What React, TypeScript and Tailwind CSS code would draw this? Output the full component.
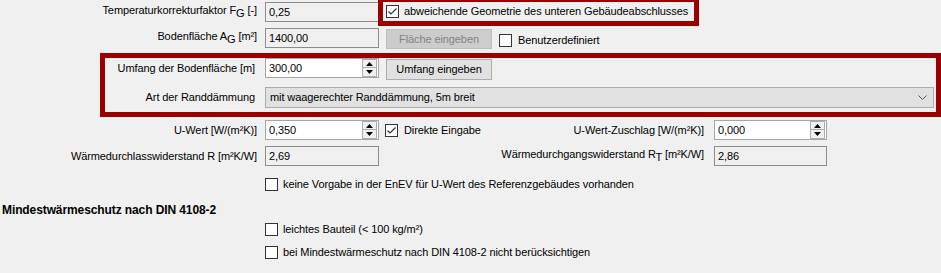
import React from "react";

function CheckBox({ checked = false }: { checked?: boolean }) {
  return (
    <div className="flex h-[13px] w-[13px] shrink-0 items-center justify-center border border-[#333333] bg-white">
      {checked && (
        <svg width="11" height="11" viewBox="0 0 11 11">
          <polyline points="1.5,5.5 4,8 9.5,2.5" fill="none" stroke="#333333" strokeWidth="1.2" />
        </svg>
      )}
    </div>
  );
}

function SpinButtons() {
  return (
    <div className="mr-[1px] flex h-[18px] w-[15px] shrink-0 flex-col">
      <div className="flex h-[9px] items-center justify-center border border-[#adadad] bg-[#f0f0f0]">
        <svg width="7" height="4" viewBox="0 0 7 4">
          <polygon points="3.5,0 7,4 0,4" fill="#000" />
        </svg>
      </div>
      <div className="flex h-[9px] items-center justify-center border border-t-0 border-[#adadad] bg-[#f0f0f0]">
        <svg width="7" height="4" viewBox="0 0 7 4">
          <polygon points="0,0 7,0 3.5,4" fill="#000" />
        </svg>
      </div>
    </div>
  );
}

function TextBox({
  value,
  readOnly = false,
  spin = false,
  w,
}: {
  value: string;
  readOnly?: boolean;
  spin?: boolean;
  w: string;
}) {
  return (
    <div
      className={`flex h-[20px] shrink-0 items-center border ${
        readOnly ? "border-[#8c8c8c] bg-[#f0f0f0]" : "border-[#a5a5a5] bg-white"
      } ${w}`}
    >
      <span className="flex-1 pl-[3px] leading-none">{value}</span>
      {spin && <SpinButtons />}
    </div>
  );
}

function Label({ children, w }: { children: React.ReactNode; w: string }) {
  return <div className={`shrink-0 whitespace-nowrap text-right ${w}`}>{children}</div>;
}

function Sub({ children }: { children: React.ReactNode }) {
  return <span className="relative top-[3px] text-[11px]">{children}</span>;
}

export default function App() {
  return (
    <div className="h-[273px] w-[941px] overflow-hidden bg-[#f0f0f0] font-['Liberation_Sans',Arial,sans-serif] text-[11px] tracking-[-0.1px] text-black">
      {/* Row 1 */}
      <div className="flex h-[26px] items-start">
        <div className="flex h-[22px] items-end pb-[4px]">
          <Label w="w-[257px]">
            Temperaturkorrekturfaktor F<Sub>G</Sub> [-]
          </Label>
        </div>
        <div className="ml-[8px] mt-[2px]">
          <TextBox value="0,25" readOnly w="w-[114px]" />
        </div>
        <div className="ml-[-1px] flex h-[26px] w-[321px] items-center border-[5px] border-t-[2px] border-[#9b0000] pl-[3px]">
          <CheckBox checked />
          <span className="ml-[5px] whitespace-nowrap">abweichende Geometrie des unteren Gebäudeabschlusses</span>
        </div>
      </div>

      {/* Row 2 */}
      <div className="mt-[2px] flex h-[21px] items-start">
        <div className="flex h-[20px] items-end pb-[4px]">
          <Label w="w-[257px]">
            Bodenfläche A<Sub>G</Sub> [m²]
          </Label>
        </div>
        <div className="ml-[8px]">
          <TextBox value="1400,00" readOnly w="w-[114px]" />
        </div>
        <div className="ml-[7px] mt-[1px] flex h-[20px] w-[106px] items-center justify-center border border-[#bfbfbf] bg-[#cccccc] text-[#838383]">
          Fläche eingeben
        </div>
        <div className="ml-[7px] mt-[6px] flex h-[13px] items-center">
          <CheckBox />
          <span className="ml-[6px]">Benutzerdefiniert</span>
        </div>
      </div>

      {/* Red box 2 */}
      <div className="ml-[100px] mt-[4px] h-[64px] w-[841px] border-[5px] border-[#9b0000]">
        <div className="flex h-[22px] items-start">
          <div className="flex h-[20px] items-center">
            <Label w="w-[150px]">Umfang der Bodenfläche [m]</Label>
          </div>
          <div className="ml-[10px]">
            <TextBox value="300,00" spin w="w-[114px]" />
          </div>
          <div className="ml-[7px] mt-[1px] flex h-[21px] w-[106px] items-center justify-center border border-[#adadad] bg-[#e1e1e1]">
            Umfang eingeben
          </div>
        </div>
        <div className="mt-[7px] flex h-[21px] items-center">
          <Label w="w-[150px]">Art der Randdämmung</Label>
          <div className="ml-[10px] flex h-[21px] w-[669px] items-center justify-between border border-[#adadad] bg-[#e1e1e1] pl-[4px] pr-[6px]">
            <span>mit waagerechter Randdämmung, 5m breit</span>
            <svg width="9" height="5" viewBox="0 0 9 5">
              <polyline points="0.5,0.5 4.5,4.5 8.5,0.5" fill="none" stroke="#555" strokeWidth="1" />
            </svg>
          </div>
        </div>
      </div>

      {/* U-Wert row */}
      <div className="mt-[3px] flex h-[20px] items-center">
        <Label w="w-[257px]">U-Wert [W/(m²K)]</Label>
        <div className="ml-[8px]">
          <TextBox value="0,350" spin w="w-[114px]" />
        </div>
        <div className="ml-[6px] flex w-[150px] shrink-0 items-center">
          <CheckBox checked />
          <span className="ml-[6px]">Direkte Eingabe</span>
        </div>
        <Label w="w-[169px]">U-Wert-Zuschlag [W/(m²K)]</Label>
        <div className="ml-[10px]">
          <TextBox value="0,000" spin w="w-[113px]" />
        </div>
      </div>

      {/* R row */}
      <div className="mt-[6px] flex h-[20px] items-center">
        <Label w="w-[257px]">Wärmedurchlasswiderstand R [m²K/W]</Label>
        <div className="ml-[8px]">
          <TextBox value="2,69" readOnly w="w-[114px]" />
        </div>
        <div className="w-[110px] shrink-0" />
        <div className="flex h-[20px] items-end pb-[4px]">
          <Label w="w-[215px]">
            Wärmedurchgangswiderstand R<Sub>T</Sub> [m²K/W]
          </Label>
        </div>
        <div className="ml-[10px]">
          <TextBox value="2,86" readOnly w="w-[113px]" />
        </div>
      </div>

      {/* keine Vorgabe */}
      <div className="mt-[12px] flex h-[13px] items-center pl-[265px]">
        <CheckBox />
        <span className="ml-[5px] whitespace-nowrap">keine Vorgabe in der EnEV für U-Wert des Referenzgebäudes vorhanden</span>
      </div>

      {/* Heading */}
      <div className="mt-[12px] h-[14px] pl-[2px] text-[12px] font-bold leading-[14px]">
        Mindestwärmeschutz nach DIN 4108-2
      </div>

      <div className="mt-[6px] flex h-[13px] items-center pl-[265px]">
        <CheckBox />
        <span className="ml-[5px] whitespace-nowrap">leichtes Bauteil (&lt; 100 kg/m²)</span>
      </div>

      <div className="mt-[10px] flex h-[13px] items-center pl-[265px]">
        <CheckBox />
        <span className="ml-[5px] whitespace-nowrap">bei Mindestwärmeschutz nach DIN 4108-2 nicht berücksichtigen</span>
      </div>
    </div>
  );
}
